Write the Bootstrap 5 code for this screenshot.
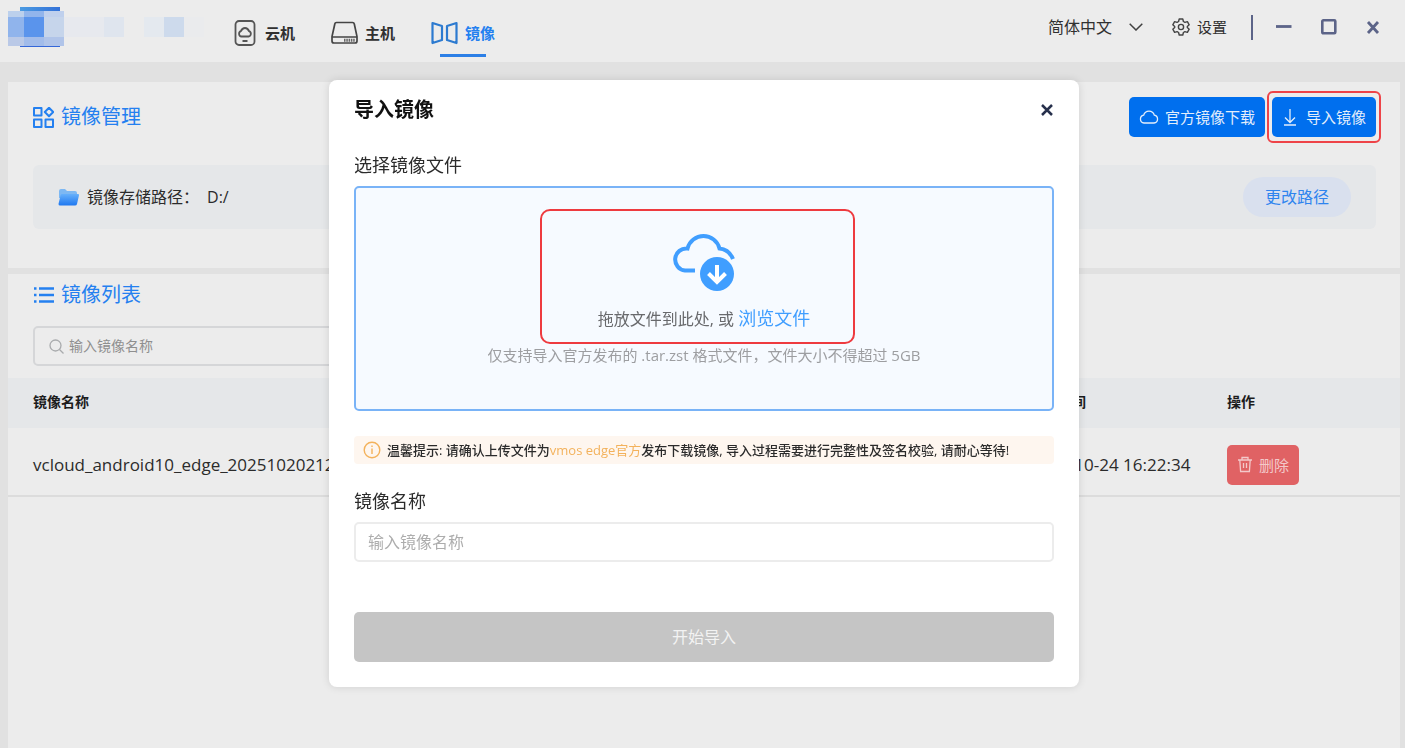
<!DOCTYPE html>
<html lang="zh-CN">
<head>
<meta charset="utf-8">
<meta name="viewport" content="width=device-width, initial-scale=1">
<title>镜像管理</title>
<link href="https://cdn.jsdelivr.net/npm/bootstrap@5.3.0/dist/css/bootstrap.min.css" rel="stylesheet">
<style>
  body { font-family: "Open Sans", "Noto Sans CJK SC", sans-serif; font-size: 16px; line-height: 24px; color: #2b2b2b; background: #e1e1e1; }
  svg { display: block; flex: none; }
  .app-header { height: 62px; background: #ececec; padding: 0 25px 0 8px; }
  .main-nav { gap: 36px; padding: 3px 0 0 26px; }
  .main-nav .nav-link { position: relative; padding: 0; height: 60px; gap: 7px; font-size: 15px; font-weight: 700; color: #303030; }
  .main-nav .nav-link.active { color: #2480f0; }
  .main-nav .nav-link.active::after { content: ""; position: absolute; left: 9px; right: 9px; bottom: 6px; height: 3px; background: #2c7fe6; }
  .header-tools { height: 54px; }
  .plain-btn { border: 0; background: none; padding: 0; color: #303030; }
  .settings-btn { font-size: 15px; gap: 6px; margin-left: 28px; }
  .lang-select { width: 95px; height: 28px; border: 0; padding: 0; font-size: 16px; color: #303030; appearance: none;
    background: url("data:image/svg+xml,%3Csvg xmlns='http://www.w3.org/2000/svg' width='14' height='8' fill='none' stroke='%23404040' stroke-width='1.5'%3E%3Cpath d='M.7.7 7 7 13.3.7'/%3E%3C/svg%3E") no-repeat right center; }
  .tools-rule { width: 2px; height: 25px; background: #5c6488; margin: 0 23px 0 24px; }
  .win-btns { gap: 29px; }
  .app-main { padding: 20px 5px 0 8px; min-height: calc(100vh - 62px); gap: 6px; }
  .panel { background: #ececec; }
  .manage-panel { padding: 9px 19px 39px 25px; }
  .panel-title { font-size: 20px; line-height: 28px; font-weight: 400; color: #2480f0; gap: 7px; margin: 0; }
  .btn-fill { height: 40px; padding: 0 10px; border: 0; border-radius: 5px; background: #006fee; color: #e3eefb; font-size: 15px; line-height: 24px; gap: 6px; }
  .btn-fill:hover { background: #0064d8; color: #fff; }
  .manage-actions { gap: 2px; }
  .callout-frame { border: 2px solid #ee4348; border-radius: 6px; padding: 4px 3px; }
  .path-bar { background: #e5e7e9; border-radius: 6px; height: 64px; padding: 0 25px; margin: 22px 5px 0 0; }
  .btn-path { height: 40px; width: 108px; border-radius: 20px; background: #d9e0ee; color: #2e84ee; font-size: 16px; padding: 0; border: 0; }
  .list-head { padding: 7px 25px 12px; }
  .search-box { width: 400px; height: 40px; margin-top: 17px; padding: 0 14px; gap: 5px; border: 2px solid #d5d6d8; border-radius: 5px; }
  .search-box input { border: 0; background: none; font-size: 14px; outline: 0; }
  .search-box input::placeholder { color: #8f8f8f; opacity: 1; }
  .image-table { table-layout: fixed; margin: 0; --bs-table-bg: transparent; --bs-table-color: #2b2b2b; }
  .image-table th { height: 50px; padding: 0 25px 2px; font-size: 14px; font-weight: 700; color: #1c1c1c; background: #e5e7e9; border: 0; vertical-align: middle; }
  .image-table td { height: 68px; padding: 6px 25px 0; font-size: 17px; border-bottom: 2px solid #dcdcdc; vertical-align: middle; white-space: nowrap; }
  .col-time { width: 197px; }
  .col-action { width: 198px; }
  .btn-del { background: #e06264; color: #f3c9ca; }
  .btn-del:hover { background: #d25557; }
  .import-modal { padding: 80px 5px 0 8px; }
  .import-modal .modal-dialog { max-width: 750px; margin: 0 auto; }
  .import-modal .modal-content { border: 0; border-radius: 8px; padding: 16px 25px 25px; box-shadow: 0 0 8px rgba(0,0,0,.12); color: #2b2b2b; }
  .dialog-title { font-size: 20px; line-height: 28px; font-weight: 700; color: #111; margin: 0; }
  .field-label { font-size: 18px; line-height: 26px; margin: 0 0 8px; }
  .file-label { margin-top: 28px; }
  .drop-area { height: 225px; padding-top: 43px; border: 2px solid #79b3f7; border-radius: 5px; background: #f6faff; }
  .drop-callout { position: absolute; inset: -22px -45px -12px -58px; border: 2px solid #ee3a3f; border-radius: 10px; pointer-events: none; }
  .drop-text { font-size: 16px; line-height: 26px; color: #68696c; margin-top: 14px; }
  .drop-text a { font-size: 18px; color: #409eff; text-decoration: none; }
  .drop-hint { font-size: 15px; line-height: 22px; color: #9d9ea1; margin-top: 12px; }
  .tip-line { height: 28px; margin-top: 25px; padding: 0 9px; gap: 6px; border-radius: 4px; background: #fef6ef; font-size: 13px; line-height: 20px; font-weight: 500; }
  .tip-line b { font-weight: 400; color: #f3b25c; }
  .name-label { margin-top: 24px; }
  .name-input { height: 40px; padding: 0 12px; font-size: 16px; border: 2px solid #ececec; border-radius: 5px; }
  .name-input::placeholder { color: #adadad; opacity: 1; }
  .btn-start, .btn-start:disabled { height: 50px; margin-top: 50px; border: 0; border-radius: 5px; background: #c5c5c5; color: #f3f3f3; font-size: 16px; opacity: 1; }
</style>
</head>
<body>
<header class="app-header d-flex justify-content-between">
  <div class="d-flex">
    <svg width="200" height="50" viewBox="8 0 200 50" role="img" aria-label="logo" shape-rendering="crispEdges">
      <defs><linearGradient id="lg"><stop offset="0" stop-color="#4b9be2"/><stop offset="1" stop-color="#3472d8"/></linearGradient></defs>
      <rect x="20" y="7" width="40" height="5" fill="url(#lg)"/><rect x="20" y="45" width="40" height="2" fill="#3567d8"/>
      <path fill="#bcd0ec" d="M8 11h16v6H8z"/><path fill="#92b5ec" d="M24 11h20v6H24z"/><path fill="#bfd0ed" d="M44 11h20v6H44z"/>
      <path fill="#90b4ec" d="M8 17h16v20H8z"/><path fill="#5a94ec" d="M24 17h20v20H24z"/><path fill="#c6d5eb" d="M44 17h20v20H44z"/>
      <path fill="#bac9e7" d="M8 37h16v9H8z"/><path fill="#a2bcea" d="M24 37h20v9H24z"/><path fill="#b0c4e9" d="M44 37h20v9H44z"/>
      <path fill="#e7e9ee" d="M64 17h40v20H64z"/><path fill="#dfe5ee" d="M104 17h20v20h-20z"/><path fill="#e4e9ef" d="M144 17h20v20h-20z"/><path fill="#cddaec" d="M164 17h20v20h-20z"/><path fill="#eaebed" d="M184 17h20v20h-20z"/>
    </svg>
    <nav class="main-nav nav flex-nowrap">
      <a href="#" class="nav-link d-flex align-items-center">
        <svg width="24" height="26" viewBox="0 0 24 26" fill="none" stroke="#555" stroke-width="1.8"><rect x="1.500" y="1" width="19" height="24" rx="3.500"/><path d="M7.500 16.500a2.800 2.800 0 0 1-.6-5.400C8 8.500 9.500 8 11 8s3 .5 4 3.100a2.800 2.800 0 0 1-.5 5.400zM8.500 21h5"/></svg>云机</a>
      <a href="#" class="nav-link d-flex align-items-center">
        <svg width="27" height="24" viewBox="0 0 27 24" fill="none" stroke="#444" stroke-width="1.700"><path d="M5.500 1.500h16q1.500 0 1.800 1.500L26 15.500V20q0 2-2 2H3q-2 0-2-2v-4.500L3.800 3Q4 1.500 5.500 1.500zM1 16h25"/><path d="M13 19.300h11" stroke-width="3" stroke="#666" stroke-dasharray="1.500 .8"/></svg>主机</a>
      <a href="#" class="nav-link active d-flex align-items-center" aria-current="page">
        <svg width="27" height="24" viewBox="0 0 27 24" fill="none" stroke="#2c7ad0" stroke-width="2.200" stroke-linejoin="round"><path d="M1.500 2 11 5v14l-9.500 3zM25.500 2 16 5v14l9.500 3z"/></svg>镜像</a>
    </nav>
  </div>
  <div class="header-tools d-flex align-items-center">
    <select class="lang-select" aria-label="语言"><option>简体中文</option></select>
    <button type="button" class="plain-btn settings-btn d-flex align-items-center"><svg width="20" height="18" viewBox="0 0 20 18" fill="none" stroke="#444" stroke-width="1.400" stroke-linejoin="round"><path d="M8.200 1h3.600l.6 2.500 1.500.9 2.500-.8 1.800 3.200L16.300 8.500v1l1.900 1.700-1.800 3.200-2.500-.8-1.500.9-.6 2.500H8.200l-.6-2.500-1.500-.9-2.500.8L1.800 11.200l1.900-1.700v-1L1.800 6.800l1.800-3.200 2.500.8 1.500-.9z"/><circle cx="10" cy="9" r="2.600"/></svg>设置</button>
    <span class="tools-rule"></span>
    <div class="win-btns d-flex align-items-center">
      <button type="button" class="plain-btn" aria-label="最小化"><svg width="16" height="16" stroke="#5c6488" stroke-width="2.800"><path d="M0 7.500h15.500"/></svg></button>
      <button type="button" class="plain-btn" aria-label="最大化"><svg width="16" height="16" fill="none" stroke="#5c6488" stroke-width="2.600"><rect x="1.300" y="1.300" width="13" height="13" rx="1"/></svg></button>
      <button type="button" class="plain-btn" aria-label="关闭窗口"><svg width="14" height="14" stroke="#5c6488" stroke-width="2.800"><path d="m2 2 10 11M12 2 2 13"/></svg></button>
    </div>
  </div>
</header>

<main class="app-main d-flex flex-column">
  <section class="panel manage-panel">
    <div class="d-flex justify-content-between align-items-center">
      <h1 class="panel-title d-flex align-items-center">
        <svg width="21" height="21" viewBox="0 0 21 21" fill="none" stroke="#2480f0" stroke-width="2" stroke-linejoin="round"><rect x="1" y="1" width="7.500" height="7.500"/><rect x="1" y="12.500" width="7.500" height="7.500"/><rect x="12.500" y="12.500" width="7.500" height="7.500"/><path d="m16 .8 4.200 4.200L16 9.200 11.800 5z"/></svg>镜像管理</h1>
      <div class="manage-actions d-flex align-items-center">
        <button type="button" class="btn btn-fill d-flex align-items-center"><svg width="20" height="16" viewBox="0 0 20 16" fill="none" stroke="currentColor" stroke-width="1.300"><path d="M5 14a4 4 0 0 1-.3-7.900 5.500 5.500 0 0 1 10.600 0A4 4 0 0 1 15 14z"/></svg>官方镜像下载</button>
        <div class="callout-frame">
          <button type="button" class="btn btn-fill d-flex align-items-center"><svg width="18" height="20" viewBox="0 0 18 20" fill="none" stroke="currentColor" stroke-width="1.300"><path d="M8 2v13M3 10.500l5 5 5-5M2 18h12"/></svg>导入镜像</button>
        </div>
      </div>
    </div>
    <div class="path-bar d-flex align-items-center justify-content-between">
      <div class="d-flex align-items-center gap-2">
        <svg width="21" height="18" viewBox="0 0 21 18"><defs><linearGradient id="fg" x2="0" y2="1"><stop stop-color="#66b0fb"/><stop offset="1" stop-color="#1f78f0"/></linearGradient></defs><path d="M1 3q0-2 2-2h4l2 2h8q2 0 2 2v5H1z" fill="#7db8f3"/><path d="M4 6h16q1.300 0 1 1.300L19 16q-.4 1.500-2 1.500H2q-1.500 0-1.500-1.500L2.600 7Q3 6 4 6z" fill="url(#fg)"/></svg>
        <span>镜像存储路径：</span><span>D:/</span>
      </div>
      <button type="button" class="btn btn-path">更改路径</button>
    </div>
  </section>

  <section class="panel flex-grow-1">
    <div class="list-head">
      <h2 class="panel-title d-flex align-items-center">
        <svg width="21" height="18" viewBox="0 0 21 18" stroke="#2480f0" stroke-width="2.600"><path d="M6 2.500h15M6 9h15M6 15.500h15M1 2.500h2.500M1 9h2.500M1 15.500h2.500"/></svg>镜像列表</h2>
      <div class="search-box d-flex align-items-center">
        <svg width="15" height="15" viewBox="0 0 15 15" fill="none" stroke="#a9abad" stroke-width="1.300"><circle cx="6.500" cy="6.500" r="5.500"/><path d="m10.500 10.500 4 4"/></svg>
        <input type="text" class="flex-grow-1 p-0" placeholder="输入镜像名称" aria-label="搜索镜像">
      </div>
    </div>
    <table class="table image-table">
      <thead><tr><th>镜像名称</th><th class="col-time">创建时间</th><th class="col-action">操作</th></tr></thead>
      <tbody><tr>
        <td>vcloud_android10_edge_20251020212</td>
        <td>2025-10-24 16:22:34</td>
        <td><button type="button" class="btn btn-fill btn-del d-flex align-items-center"><svg width="16" height="17" viewBox="0 0 16 17" fill="none" stroke="currentColor" stroke-width="1.300"><path d="M1 4h14M5 4V1.500h6V4M2.800 4l.8 11.500h8.800L13.200 4M6.500 7v5M9.500 7v5"/></svg>删除</button></td>
      </tr></tbody>
    </table>
  </section>
</main>

<div class="modal import-modal d-block" tabindex="-1" role="dialog" aria-labelledby="dlgTitle">
  <div class="modal-dialog">
    <form class="modal-content">
      <div class="d-flex align-items-center justify-content-between">
        <h2 class="dialog-title" id="dlgTitle">导入镜像</h2>
        <button type="button" class="plain-btn me-n1" aria-label="关闭"><svg width="14" height="14" viewBox="0 0 14 14" stroke="#27304c" stroke-width="2.500"><path d="m2 2 10 10M12 2 2 12"/></svg></button>
      </div>
      <div class="field-label file-label">选择镜像文件</div>
      <div class="drop-area d-flex flex-column align-items-center">
        <div class="position-relative d-flex flex-column align-items-center">
          <svg width="62" height="60" viewBox="0 0 62 60" fill="none"><path d="M22 39.500H12A10.500 10.500 0 0 1 14.500 17.500 16.500 16.500 0 0 1 46.500 17.500Q56 18.500 60 28" stroke="#409eff" stroke-width="4"/><circle cx="44" cy="43" r="17" fill="#409eff"/><path d="M44 34v16M35.500 42.500l8.500 8.500 8.500-8.500" stroke="#fff" stroke-width="4"/></svg>
          <div class="drop-text">拖放文件到此处, 或 <a href="#">浏览文件</a></div>
          <div class="drop-callout"></div>
        </div>
        <div class="drop-hint">仅支持导入官方发布的 .tar.zst 格式文件，文件大小不得超过 5GB</div>
      </div>
      <div class="tip-line d-flex align-items-center">
        <svg width="18" height="18" viewBox="0 0 18 18" fill="none" stroke="#f3b25c" stroke-width="1.400"><circle cx="9" cy="9" r="7.800"/><path d="M9 7.500v5.500M9 4.500V6"/></svg>
        <span>温馨提示: 请确认上传文件为<b>vmos edge官方</b>发布下载镜像, 导入过程需要进行完整性及签名校验, 请耐心等待!</span>
      </div>
      <label class="field-label name-label" for="imgName">镜像名称</label>
      <input type="text" class="form-control name-input" id="imgName" placeholder="输入镜像名称">
      <button type="submit" class="btn btn-start w-100" disabled>开始导入</button>
    </form>
  </div>
</div>
<script src="https://cdn.jsdelivr.net/npm/bootstrap@5.3.0/dist/js/bootstrap.bundle.min.js"></script>
</body>
</html>
